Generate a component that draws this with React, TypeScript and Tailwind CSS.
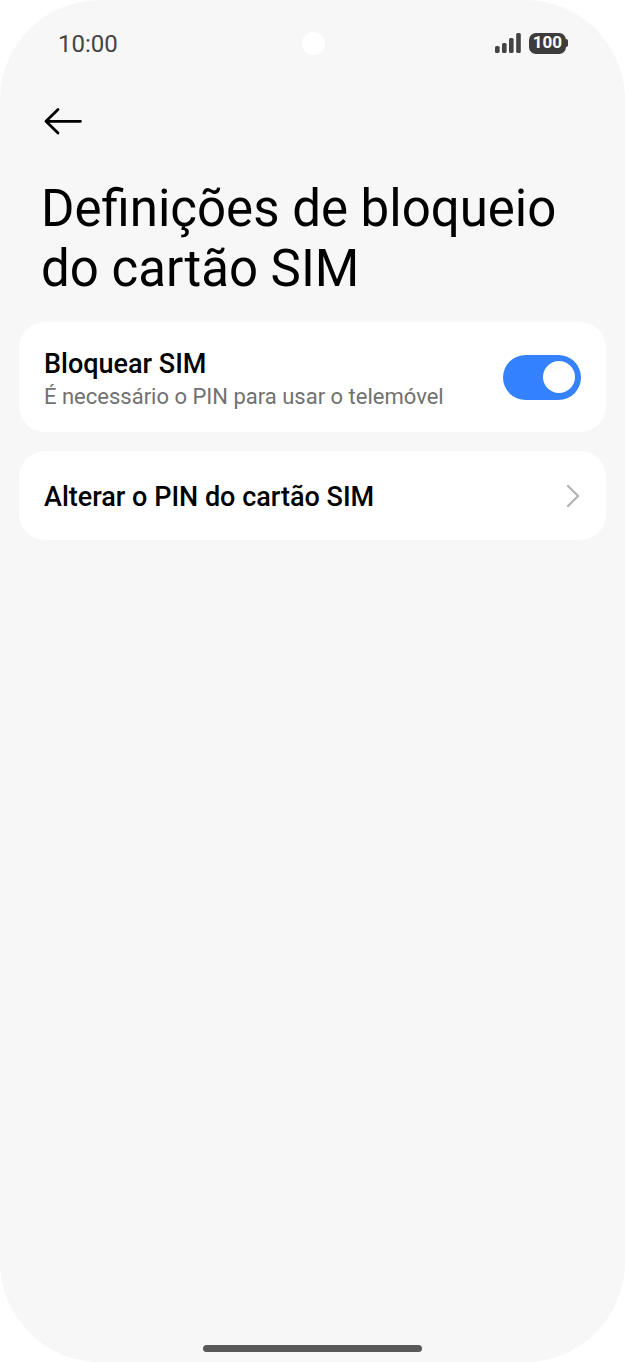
import React, { useState } from 'react';

function SignalIcon() {
  return (
    <svg width="27" height="22" viewBox="0 0 27 22" fill="#444444" aria-hidden="true">
      <rect x="0" y="14" width="4.6" height="7" rx="1.5" />
      <rect x="7" y="11" width="4.6" height="10" rx="1.5" />
      <rect x="14" y="6" width="4.6" height="15" rx="1.5" />
      <rect x="21.2" y="1" width="4.6" height="20" rx="1.5" />
    </svg>
  );
}

function StatusBar() {
  return (
    <header className="grid h-[86px] grid-cols-[1fr_auto_1fr] items-center pl-[58px] pr-[57px] text-[#444444]">
      <time className="pt-0.5 text-2xl">10:00</time>
      <span className="h-[23px] w-[23px] rounded-full bg-white" />
      <div className="flex items-center justify-end gap-[7px]">
        <SignalIcon />
        <div className="flex items-center">
          <span className="flex h-[21px] w-[37px] items-center justify-center rounded-[7px] bg-[#3c3c3c] text-[17px] font-bold text-white">
            100
          </span>
          <span className="h-2 w-0.5 rounded-r-sm bg-[#3c3c3c]" />
        </div>
      </div>
    </header>
  );
}

interface LockSwitchProps {
  checked: boolean;
  onChange: (checked: boolean) => void;
}

function LockSwitch({ checked, onChange }: LockSwitchProps) {
  return (
    <input
      id="sim-lock"
      type="checkbox"
      role="switch"
      checked={checked}
      onChange={(e) => onChange(e.target.checked)}
      className="flex h-[45px] w-[78px] shrink-0 cursor-pointer appearance-none items-center rounded-full bg-gray-300 px-1.5 before:h-8 before:w-8 before:rounded-full before:bg-white checked:justify-end checked:bg-[#3482ff]"
    />
  );
}

export default function App() {
  const [locked, setLocked] = useState(true);

  return (
    <div className="bg-white font-['Roboto',sans-serif]">
      <div className="flex min-h-screen flex-col rounded-[100px] bg-[#f7f7f7] text-black">
        <StatusBar />

        <main className="flex-1 px-[19px]">
          <button type="button" aria-label="Voltar" className="ml-6 mt-5 block">
            <svg width="40" height="30" viewBox="0 0 40 30" fill="none" stroke="currentColor" strokeWidth="2.8" strokeLinecap="round" strokeLinejoin="round">
              <path d="M37.5 15.3H3M15 3.5L3 15.3L15 27" />
            </svg>
          </button>

          <h1 className="mx-[22px] mt-[43px] text-[51px] leading-[60px]">
            Definições de bloqueio do cartão SIM
          </h1>

          <section className="mt-[23px] flex flex-col gap-[19px]">
            <div className="flex min-h-[110px] items-center justify-between gap-4 rounded-[26px] bg-white px-[25px]">
              <label htmlFor="sim-lock" className="cursor-pointer pt-1">
                <span className="block text-[27px] font-medium leading-9">Bloquear SIM</span>
                <span className="block text-[22px] leading-[30px] text-[#717171]">
                  É necessário o PIN para usar o telemóvel
                </span>
              </label>
              <LockSwitch checked={locked} onChange={setLocked} />
            </div>

            <button
              type="button"
              className="flex min-h-[89px] w-full items-center justify-between rounded-[26px] bg-white px-[25px] text-left text-[27px] font-medium leading-9"
            >
              <span className="pt-0.5">Alterar o PIN do cartão SIM</span>
              <svg width="16" height="24" viewBox="0 0 16 24" fill="none" stroke="#b2b2b2" strokeWidth="2.2" strokeLinecap="round" strokeLinejoin="round" aria-hidden="true">
                <path d="M3 2L13.2 12L3 22" />
              </svg>
            </button>
          </section>
        </main>

        <footer className="flex justify-center pb-2.5">
          <span className="h-[7px] w-[35%] rounded-full bg-[#595959]" />
        </footer>
      </div>
    </div>
  );
}
